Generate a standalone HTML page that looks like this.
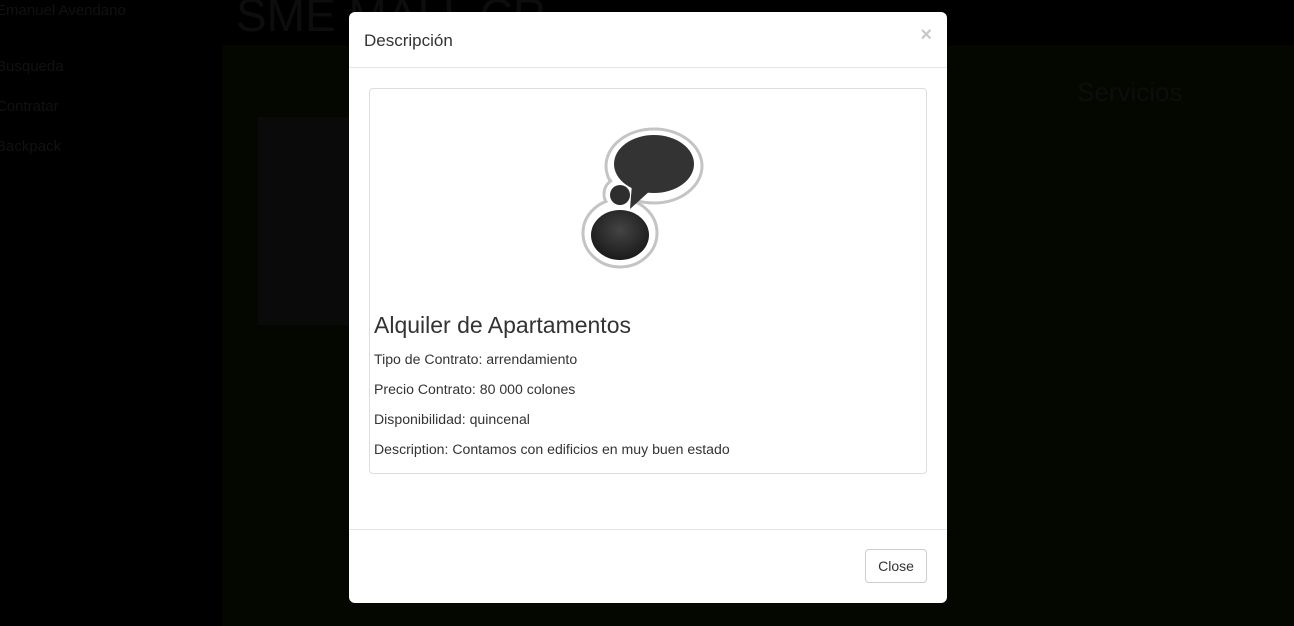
<!DOCTYPE html>
<html><head><meta charset="utf-8"><style>
*{margin:0;padding:0;box-sizing:border-box}
body{width:1294px;height:626px;background:#000;position:relative;overflow:hidden;font-family:"Liberation Sans",Arial,sans-serif;color:#333}
.bg{position:absolute}
.modal{position:absolute;left:349px;top:12px;width:598px;height:591px;background:#fff;border-radius:6px}
.hdr{height:56px;border-bottom:1px solid #e5e5e5;position:relative}
.hdr h4{position:absolute;left:15px;top:19px;font-size:17px;font-weight:normal;color:#333}
.x{position:absolute;right:15px;top:12px;font-size:20px;font-weight:bold;color:#c8c8c8}
.panel{position:absolute;left:20px;top:76px;width:558px;height:386px;border:1px solid #ddd;border-radius:4px}
.panel h3{position:absolute;left:4px;top:223px;font-size:23px;font-weight:normal;color:#333}
.panel p{position:absolute;left:4px;font-size:14.1px;color:#333}
.ftr{position:absolute;left:0;top:517px;width:598px;border-top:1px solid #e5e5e5}
.btn{position:absolute;left:516px;top:537px;width:62px;height:34px;border:1px solid #ccc;border-radius:4px;font-size:14px;text-align:center;line-height:32px;color:#333}
</style></head><body>
<div class="bg" style="left:222px;top:45px;width:1072px;height:581px;background:#040600"></div>
<div class="bg" style="left:258px;top:117px;width:92px;height:208px;background:#0a0a0a"></div>
<div class="bg" style="left:-4px;top:2px;font-size:15px;color:#111">Emanuel Avendano</div>
<div class="bg" style="left:-4px;top:58px;font-size:15px;color:#111">Busqueda</div>
<div class="bg" style="left:-4px;top:98px;font-size:15px;color:#111">Contratar</div>
<div class="bg" style="left:-4px;top:138px;font-size:15px;color:#111">Backpack</div>
<div class="bg" style="left:236px;top:-12px;font-size:46px;color:#0d0d0d">SME MALL CR</div>
<div class="bg" style="left:1077px;top:77px;font-size:26px;color:#0d0d0d">Servicios</div>
<div class="modal">
<div class="hdr"><h4>Descripción</h4><span class="x">×</span></div>
<div class="panel">
<svg style="position:absolute;left:200px;top:20px" width="160" height="170" viewBox="0 0 160 170">
<defs><radialGradient id="g" cx="50%" cy="40%" r="60%"><stop offset="0" stop-color="#444"/><stop offset="1" stop-color="#1a1a1a"/></radialGradient></defs>
<g fill="#fff" stroke="#c4c4c4" stroke-width="3">
<ellipse cx="84" cy="57" rx="48" ry="37"/>
<circle cx="50" cy="85" r="16"/>
<ellipse cx="50" cy="124" rx="37" ry="34"/>
</g>
<g fill="#fff">
<ellipse cx="84" cy="57" rx="46" ry="35"/>
<circle cx="50" cy="85" r="14.5"/>
<ellipse cx="50" cy="124" rx="35" ry="32"/>
<rect x="38" y="80" width="24" height="30"/>
</g>
<ellipse cx="84" cy="55" rx="40" ry="29" fill="#333"/>
<path d="M62 75 L60 100 L82 80 Z" fill="#333"/>
<circle cx="50" cy="86" r="10" fill="#2e2e2e"/>
<ellipse cx="50" cy="126" rx="29" ry="25" fill="url(#g)"/>
</svg>
<h3>Alquiler de Apartamentos</h3>
<p style="top:262px">Tipo de Contrato: arrendamiento</p>
<p style="top:292px">Precio Contrato: 80 000 colones</p>
<p style="top:322px">Disponibilidad: quincenal</p>
<p style="top:352px">Description: Contamos con edificios en muy buen estado</p>
</div>
<div class="ftr"></div>
<div class="btn">Close</div>
</div>
</body></html>
